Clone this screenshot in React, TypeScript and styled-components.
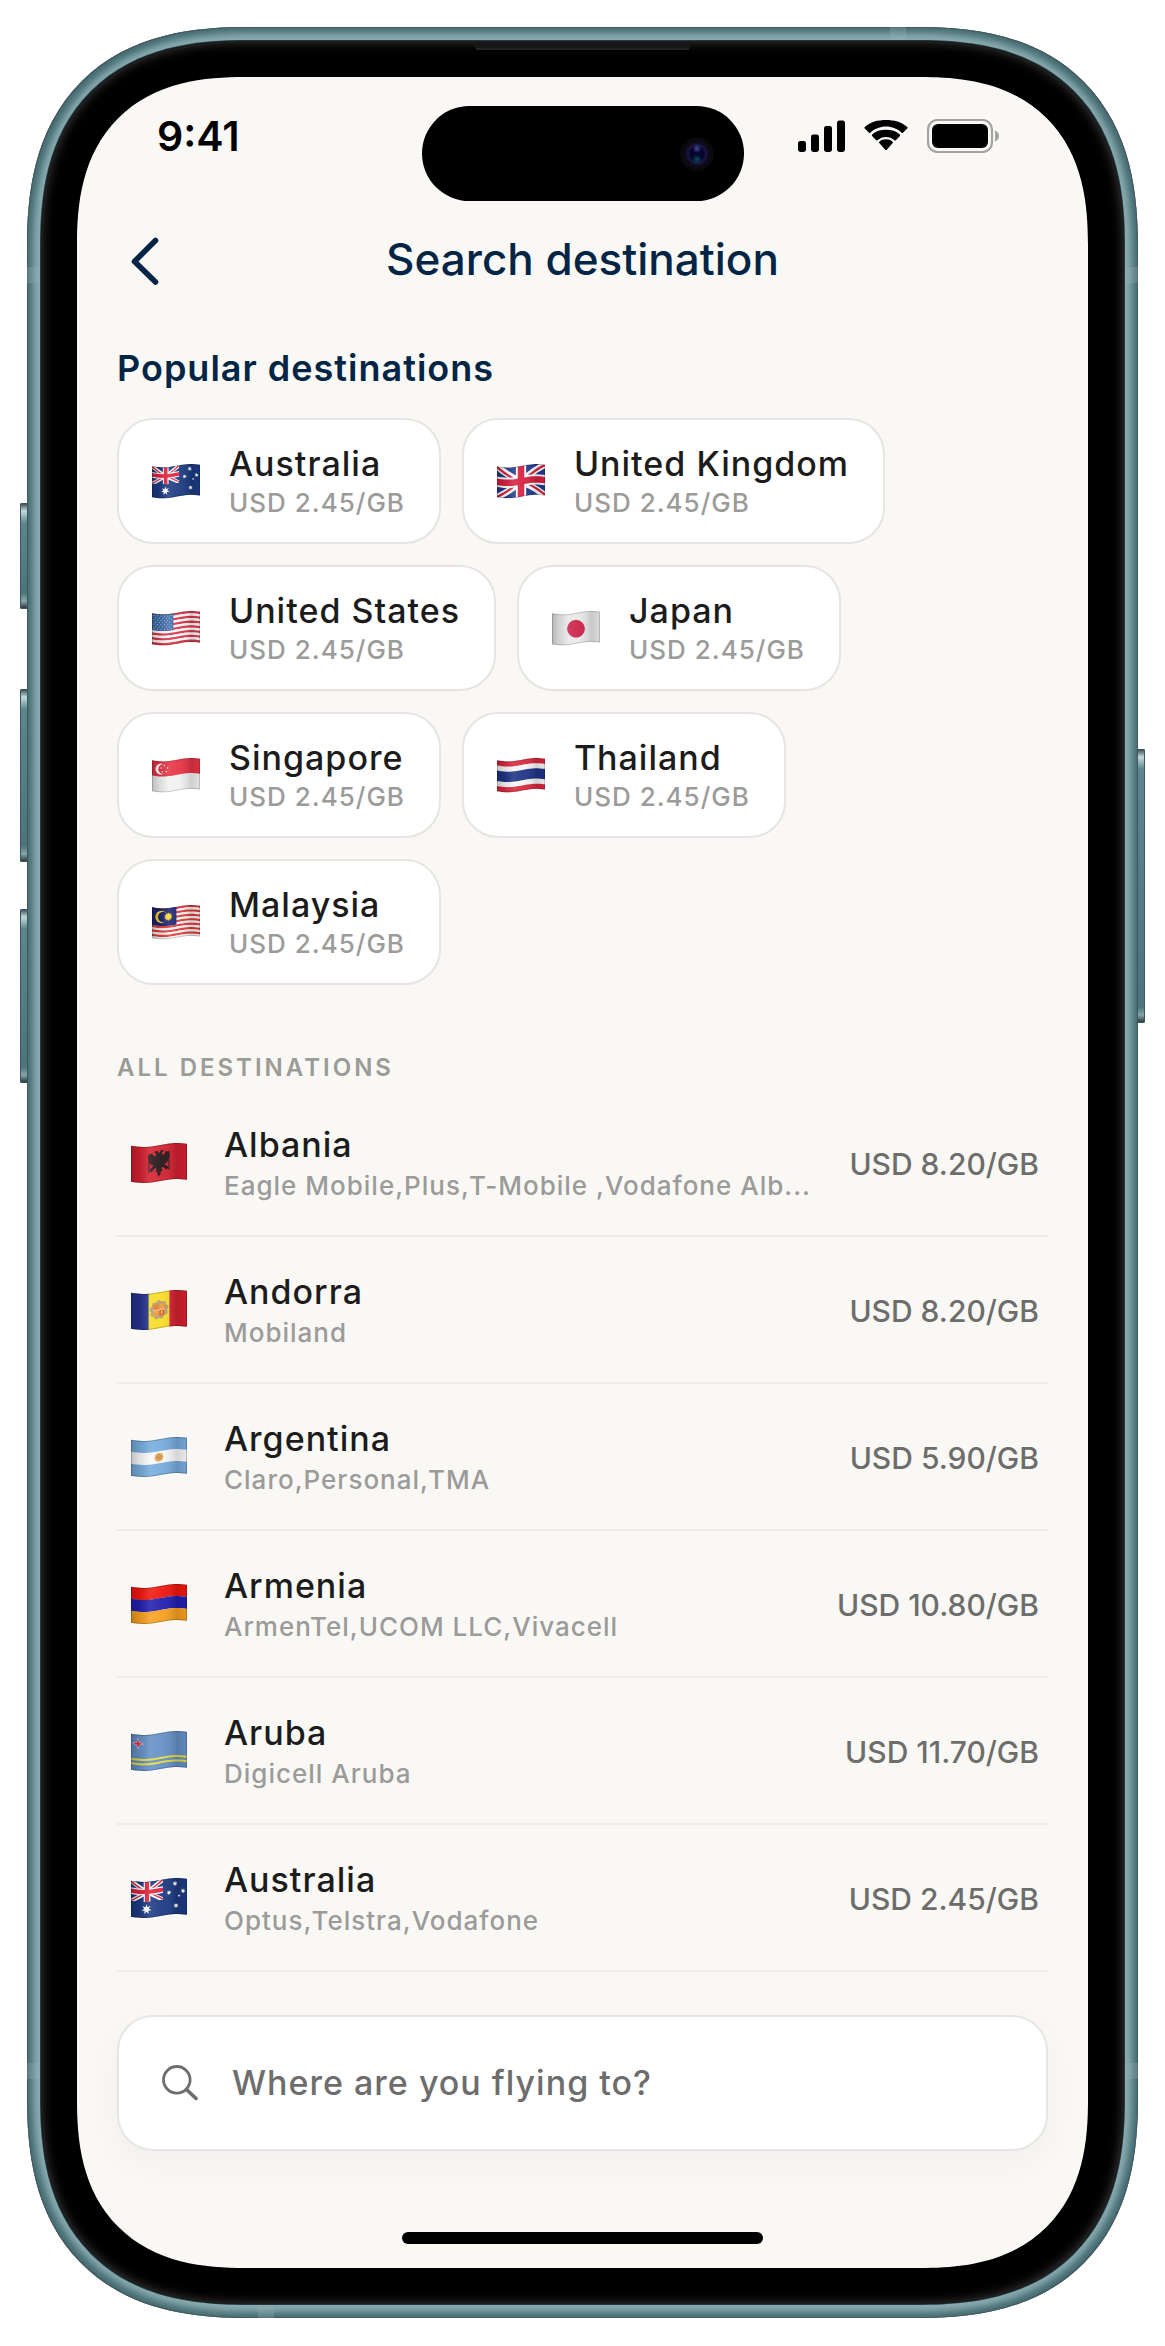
import React, { useId, useState } from "react";
import styled, { createGlobalStyle, css } from "styled-components";

/* ---------- Flags ---------- */

type Pt = [number, number];

const W = 56;
const H = 36;
const wave = (x: number) => 2 + 2 * Math.sin((2 * Math.PI * x) / 66 + 0.35);

/* Turns a flat outline into one that follows the ripple of the cloth. */
function ripple(points: Pt[], closed = true): string {
  const out: string[] = [];
  const last = closed ? points.length : points.length - 1;
  for (let i = 0; i < last; i++) {
    const [x0, y0] = points[i];
    const [x1, y1] = points[(i + 1) % points.length];
    const steps = Math.max(1, Math.ceil(Math.abs(x1 - x0) / 3));
    for (let s = 0; s < steps; s++) {
      const x = x0 + ((x1 - x0) * s) / steps;
      const y = y0 + ((y1 - y0) * s) / steps;
      out.push(`${x.toFixed(2)} ${(y + wave(x)).toFixed(2)}`);
    }
  }
  if (!closed) {
    const [x, y] = points[points.length - 1];
    out.push(`${x.toFixed(2)} ${(y + wave(x)).toFixed(2)}`);
  }
  return `M${out.join("L")}${closed ? "Z" : ""}`;
}

const rect = (x: number, y: number, w: number, h: number) =>
  ripple([
    [x, y],
    [x + w, y],
    [x + w, y + h],
    [x, y + h],
  ]);

const starPoints = (cx: number, cy: number, r: number, inner: number, n: number): Pt[] =>
  Array.from({ length: n * 2 }, (_, i) => {
    const a = (Math.PI * i) / n - Math.PI / 2;
    const d = i % 2 ? inner : r;
    return [cx + d * Math.cos(a), cy + d * Math.sin(a)] as Pt;
  });

const Band = ({ x = 0, y = 0, w = W, h = H, c }: { x?: number; y?: number; w?: number; h?: number; c: string }) => (
  <path d={rect(x, y, w, h)} fill={c} />
);
const Star = ({ x, y, r, k = 0.45, n = 7, c = "#fff" }: { x: number; y: number; r: number; k?: number; n?: number; c?: string }) => (
  <path d={ripple(starPoints(x, y, r, r * k, n))} fill={c} />
);
const Dot = ({ x, y, r, c = "#fff" }: { x: number; y: number; r: number; c?: string }) => (
  <circle cx={x} cy={y + wave(x)} r={r} fill={c} />
);
const Line = ({ p, w, c }: { p: Pt[]; w: number; c: string }) => (
  <path d={ripple(p, false)} stroke={c} strokeWidth={w} fill="none" />
);

function Union({ w, h, id, base, red }: { w: number; h: number; id: string; base: string; red: string }) {
  const u = h / 36;
  return (
    <g clipPath={`url(#${id})`}>
      <clipPath id={id}>
        <path d={rect(0, 0, w, h)} />
      </clipPath>
      <Band w={w} h={h} c={base} />
      <Line p={[[0, 0], [w, h]]} w={7.5 * u} c="#fff" />
      <Line p={[[0, h], [w, 0]]} w={7.5 * u} c="#fff" />
      <Line p={[[0, u], [w / 2, h / 2 + u]]} w={2.6 * u} c={red} />
      <Line p={[[w, h - u], [w / 2, h / 2 - u]]} w={2.6 * u} c={red} />
      <Line p={[[0, h - u * 0.2], [w / 2, h / 2 - u]]} w={2.6 * u} c={red} />
      <Line p={[[w, u * 0.2], [w / 2, h / 2 + u]]} w={2.6 * u} c={red} />
      <Band x={w / 2 - 6 * u} w={12 * u} h={h} c="#fff" />
      <Band y={h / 2 - 6 * u} w={w} h={12 * u} c="#fff" />
      <Band x={w / 2 - 3.8 * u} w={7.6 * u} h={h} c={red} />
      <Band y={h / 2 - 3.8 * u} w={w} h={7.6 * u} c={red} />
    </g>
  );
}

const eagleHalf: Pt[] = [
  [28, 8], [26.6, 5.8], [24.6, 5.2], [23, 6.6], [24.8, 7.4], [25, 9], [24, 10.6], [22.4, 9.4],
  [21, 6.8], [19.6, 8], [18, 6.8], [18.6, 9.4], [17, 9], [18.4, 11.6], [17, 11.6], [18.6, 13.8],
  [17.2, 14.2], [19.2, 16], [18, 17], [20.6, 17.8], [19.4, 19.4], [22.4, 18.8], [21.4, 21],
  [19.4, 22.4], [18, 25.6], [20, 24.4], [20.4, 26.2], [22.2, 23.8], [24.8, 22], [25.6, 23.6],
  [24.2, 26.4], [26.2, 26], [26.4, 28.6], [28, 31.4],
];
const eagle: Pt[] = [...eagleHalf, ...eagleHalf.slice(0, -1).reverse().map(([x, y]) => [56 - x, y] as Pt)];

const stripes = (n: number, a: string, b: string) =>
  Array.from({ length: n }, (_, i) => <Band key={i} y={(i * H) / n} h={H / n + 0.1} c={i % 2 ? b : a} />);

type Country = "AU" | "GB" | "US" | "JP" | "SG" | "TH" | "MY" | "AL" | "AD" | "AR" | "AM" | "AW";

function cloth(code: Country, id: string): React.ReactNode {
  switch (code) {
    case "AU":
      return (
        <>
          <Band c="#1c3a82" />
          <Union w={32} h={20} id={`${id}u`} base="#1c3a82" red="#e0243e" />
          <Star x={15.5} y={27.5} r={5.2} />
          <Star x={44} y={5.5} r={2.8} />
          <Star x={38} y={14} r={2.6} />
          <Star x={52} y={12.5} r={2.6} />
          <Star x={48} y={17.5} r={1.5} n={5} />
          <Star x={45} y={27.5} r={2.8} />
        </>
      );
    case "GB":
      return <Union w={W} h={H} id={`${id}u`} base="#223b8c" red="#d6203f" />;
    case "US":
      return (
        <>
          {stripes(13, "#d9364a", "#fafafa")}
          <Band w={25} h={19.4} c="#3c6ba8" />
          {Array.from({ length: 7 }, (_, r) =>
            Array.from({ length: r % 2 ? 5 : 6 }, (_, c) => (
              <Dot key={`${r}-${c}`} x={2.4 + c * 4 + (r % 2) * 2} y={2 + r * 2.55} r={0.6} c="#d5e2f2" />
            )),
          )}
        </>
      );
    case "JP":
      return (
        <>
          <Band c="#e9e9ea" />
          <Dot x={28} y={18.5} r={10.4} c="#cb2249" />
        </>
      );
    case "SG":
      return (
        <>
          <Band c="#f1f1f1" />
          <Band h={17.6} c="#e63343" />
          <Dot x={10.4} y={9} r={6.4} />
          <Dot x={13} y={9} r={5.6} c="#e63343" />
          {starPoints(14.4, 9, 3.9, 3.9, 5)
            .filter((_, i) => i % 2 === 0)
            .map(([x, y]) => (
              <Dot key={x + y} x={x} y={y} r={0.9} />
            ))}
        </>
      );
    case "TH":
      return (
        <>
          <Band c="#d8283b" />
          <Band y={6} h={24} c="#f5f5f5" />
          <Band y={12} h={12} c="#1f3384" />
        </>
      );
    case "MY":
      return (
        <>
          {stripes(14, "#dd3a3a", "#f4f2f0")}
          <Band w={28.5} h={20.6} c="#1c2370" />
          <Dot x={11} y={10} r={7.2} c="#f3cf2c" />
          <Dot x={13.2} y={10} r={6.2} c="#1c2370" />
          <Star x={19} y={10} r={5.2} k={0.62} n={12} c="#f8d92f" />
        </>
      );
    case "AL":
      return (
        <>
          <Band c="#d3202f" />
          <path d={ripple(eagle)} fill="#231518" />
          <Line p={[[18, 8], [18, 26]]} w={1} c="#231518" />
          <Line p={[[38, 8], [38, 26]]} w={1} c="#231518" />
        </>
      );
    case "AD":
      return (
        <>
          <Band w={18} c="#25318c" />
          <Band x={17.6} w={21} c="#f7dc23" />
          <Band x={38.4} w={17.6} c="#d5202f" />
          <Star x={28} y={17.5} r={10} k={0.82} n={9} c="#b59d72" />
          <Band x={22.6} y={12} w={5} h={5.4} c="#e8772c" />
          <Band x={28.2} y={12} w={5} h={5.4} c="#f19a31" />
          <Band x={22.6} y={18} w={5} h={5.4} c="#f19a31" />
          <Band x={28.2} y={18} w={5} h={5.4} c="#e35a2b" />
          <Line p={[[22, 17.6], [34, 17.6]]} w={0.7} c="#f5dfb0" />
          <Line p={[[30.6, 19], [30.6, 22]]} w={1.2} c="#f7dc23" />
        </>
      );
    case "AR":
      return (
        <>
          <Band c="#76abdc" />
          <Band y={12} h={12} c="#f8f8f8" />
          <Star x={28} y={18} r={5.2} k={0.72} n={12} c="#dda765" />
          <Dot x={28} y={18} r={3} c="#d4923f" />
        </>
      );
    case "AM":
      return (
        <>
          <Band h={12.1} c="#f0160f" />
          <Band y={12} h={12.1} c="#221fae" />
          <Band y={24} h={12} c="#f6a01f" />
        </>
      );
    case "AW":
      return (
        <>
          <Band c="#6590c6" />
          <Band y={24} h={2} c="#e7da3e" />
          <Band y={28.4} h={2} c="#e7da3e" />
          <Star x={7} y={9} r={6} k={0.36} n={4} c="#f1dce4" />
          <Star x={7} y={9} r={4.8} k={0.34} n={4} c="#dc2f45" />
        </>
      );
  }
}

const FlagSvg = styled.svg<{ $width: number }>`
  display: block;
  flex: none;
  width: ${(p) => p.$width}px;
  height: auto;
`;

function Flag({ code, width }: { code: Country; width: number }) {
  const id = useId();
  return (
    <FlagSvg $width={width} viewBox="0 0 56 41" aria-hidden="true">
      <defs>
        <linearGradient id={`${id}s`}>
          <stop offset="0" stopColor="#000" stopOpacity="0.22" />
          <stop offset="0.14" stopColor="#000" stopOpacity="0.1" />
          <stop offset="0.34" stopColor="#fff" stopOpacity="0.12" />
          <stop offset="0.55" stopColor="#fff" stopOpacity="0.06" />
          <stop offset="0.82" stopColor="#000" stopOpacity="0.14" />
          <stop offset="1" stopColor="#000" stopOpacity="0.06" />
        </linearGradient>
      </defs>
      {cloth(code, id)}
      <path d={rect(0, 0, W, H)} fill={`url(#${id}s)`} />
      <path d={rect(0.5, 0.5, W - 1, H - 1)} fill="none" stroke="#000" strokeOpacity="0.2" />
    </FlagSvg>
  );
}

/* ---------- Data ---------- */

const popular: { code: Country; name: string; price: string }[] = [
  { code: "AU", name: "Australia", price: "USD 2.45/GB" },
  { code: "GB", name: "United Kingdom", price: "USD 2.45/GB" },
  { code: "US", name: "United States", price: "USD 2.45/GB" },
  { code: "JP", name: "Japan", price: "USD 2.45/GB" },
  { code: "SG", name: "Singapore", price: "USD 2.45/GB" },
  { code: "TH", name: "Thailand", price: "USD 2.45/GB" },
  { code: "MY", name: "Malaysia", price: "USD 2.45/GB" },
];

const destinations: { code: Country; name: string; carriers: string; price: string }[] = [
  { code: "AL", name: "Albania", carriers: "Eagle Mobile,Plus,T-Mobile ,Vodafone Alb...", price: "USD 8.20/GB" },
  { code: "AD", name: "Andorra", carriers: "Mobiland", price: "USD 8.20/GB" },
  { code: "AR", name: "Argentina", carriers: "Claro,Personal,TMA", price: "USD 5.90/GB" },
  { code: "AM", name: "Armenia", carriers: "ArmenTel,UCOM LLC,Vivacell", price: "USD 10.80/GB" },
  { code: "AW", name: "Aruba", carriers: "Digicell Aruba", price: "USD 11.70/GB" },
  { code: "AU", name: "Australia", carriers: "Optus,Telstra,Vodafone", price: "USD 2.45/GB" },
];

/* ---------- Styles ---------- */

const GlobalStyle = createGlobalStyle`
  *, *::before, *::after { box-sizing: border-box; }
  body {
    margin: 0;
    background: #fff;
    color: #1c1c1c;
    font-family: Inter, "Liberation Sans", sans-serif;
  }
  button, input { font: inherit; color: inherit; letter-spacing: inherit; }
  h1, h2, ul { margin: 0; padding: 0; }
  ul { list-style: none; }
`;

const corner = (plain: number, smooth: number) => css`
  border-radius: ${plain}px;
  @supports (corner-shape: superellipse(1.3)) {
    border-radius: ${smooth}px;
    corner-shape: superellipse(1.3);
  }
`;

const Page = styled.main`
  padding: 27px;
`;

const Phone = styled.div`
  position: relative;
  max-width: 1111px;
  margin: 0 auto;
  padding: 14px;
  background: #8aacb0;
  box-shadow:
    inset 0 0 0 1px #48595e,
    inset 0 0 7px 6px #446c72;
  ${corner(190, 222)}
`;

const Bezel = styled.div`
  padding: 36px;
  background: #000;
  box-shadow:
    0 0 0 1px #24383d,
    inset 0 0 0 2px #1b1d1f,
    inset 0 0 12px 1px #3b3533;
  ${corner(176, 207)}
`;

const Screen = styled.div`
  display: flex;
  flex-direction: column;
  padding: 29px 40px 24px;
  background: #f9f8f5;
  ${corner(145, 168)}
`;

const SideKey = styled.span<{ $side: "left" | "right"; $top: number; $height: number }>`
  position: absolute;
  ${(p) => p.$side}: -7px;
  top: ${(p) => p.$top}px;
  width: 8px;
  height: ${(p) => p.$height}px;
  border-radius: 2px;
  background: linear-gradient(#2f4147 0, #c4dadc 8px, #5d868c 20px, #4c757b calc(100% - 16px), #86a7aa calc(100% - 8px), #1e2c31 100%);
  box-shadow: inset 0 0 0 1px #3d565c;
`;

const Antenna = styled.span<{ $edge: "left" | "right" | "top" | "bottom"; $at: number }>`
  position: absolute;
  ${(p) => p.$edge}: 0;
  ${(p) =>
    p.$edge === "left" || p.$edge === "right"
      ? css`
          top: ${p.$at}px;
          width: 13px;
          height: 16px;
        `
      : css`
          left: ${p.$at}px;
          width: 16px;
          height: 13px;
        `}
  background: rgba(150, 180, 182, 0.28);
`;

const Earpiece = styled.span`
  position: absolute;
  top: 15px;
  left: 50%;
  width: 220px;
  height: 8px;
  margin-left: -110px;
  background: linear-gradient(#161616 75%, #242424 75%);
  clip-path: polygon(0 0, 100% 0, calc(100% - 4px) 100%, 4px 100%);
`;

const StatusBar = styled.div`
  display: grid;
  grid-template-columns: 1fr 322px 1fr;
  align-items: start;
  height: 95px;
`;

const Time = styled.time`
  padding: 10px 0 0 40px;
  color: #000;
  font-size: 41px;
  font-weight: 600;
  line-height: 40px;
`;

const Island = styled.div`
  display: flex;
  align-items: center;
  justify-content: flex-end;
  height: 95px;
  padding-right: 30px;
  border-radius: 48px;
  background: #000;
`;

const Lens = styled.span`
  width: 34px;
  height: 34px;
  border-radius: 50%;
  background:
    radial-gradient(circle at 50% 34%, #4a49a0 0, rgba(60, 59, 140, 0) 16%),
    radial-gradient(circle at 50% 66%, #0e4a60 0, rgba(14, 61, 85, 0) 18%),
    radial-gradient(circle, #05052c 0 28%, #1b1744 38%, #0d0b18 48%, #0a0708 70%);
`;

const StatusIcons = styled.div`
  display: flex;
  justify-content: flex-end;
  align-items: center;
  gap: 19px;
  padding: 13px 49px 0 0;

  svg {
    display: block;
  }
`;

const Header = styled.header`
  display: grid;
  grid-template-columns: 60px 1fr 60px;
  align-items: center;
  height: 60px;
  margin-top: 28px;
`;

const BackButton = styled.button`
  display: flex;
  align-items: center;
  width: 60px;
  height: 60px;
  padding: 4px 0 0 11px;
  border: 0;
  background: none;
  color: #032545;
`;

const Title = styled.h1`
  color: #032545;
  font-size: 44px;
  font-weight: 500;
  line-height: 60px;
  text-align: center;
`;

const SectionTitle = styled.h2`
  margin-top: 57px;
  color: #032545;
  font-size: 36px;
  font-weight: 600;
  line-height: 44px;
  letter-spacing: 1px;
`;

const Chips = styled.div`
  display: flex;
  flex-wrap: wrap;
  gap: 21px;
  margin-top: 28px;
`;

const Chip = styled.button`
  display: flex;
  align-items: center;
  gap: 29px;
  height: 126px;
  padding: 2px 34px 0 33px;
  border: 2px solid #e6e5e3;
  border-radius: 36px;
  background: #fff;
  text-align: left;
`;

const Text = styled.span`
  display: flex;
  flex-direction: column;
  flex: 1;
  min-width: 0;
`;

const Name = styled.span`
  font-size: 34px;
  font-weight: 500;
  line-height: 42px;
  letter-spacing: 1px;
`;

const Detail = styled.span`
  overflow: hidden;
  color: #9b9b9a;
  font-size: 26px;
  font-weight: 500;
  line-height: 36px;
  letter-spacing: 1px;
  text-overflow: ellipsis;
  white-space: nowrap;
`;

const ListTitle = styled.h2`
  margin-top: 68px;
  color: #9b9b98;
  font-size: 24px;
  font-weight: 600;
  line-height: 30px;
  letter-spacing: 3px;
  text-transform: uppercase;
`;

const List = styled.ul`
  margin-top: 7px;
`;

const Row = styled.button`
  display: flex;
  align-items: center;
  gap: 37px;
  width: 100%;
  height: 147px;
  padding: 2px 9px 0 14px;
  border: 0;
  border-bottom: 2px solid #edecea;
  background: none;
  text-align: left;

  ${Name} {
    line-height: 44px;
  }
  ${Detail} {
    line-height: 38px;
  }
`;

const Price = styled.span`
  color: #6d6d6b;
  font-size: 30px;
  font-weight: 500;
  line-height: 38px;
  white-space: nowrap;
`;

const SearchBox = styled.label`
  display: flex;
  align-items: center;
  gap: 34px;
  height: 136px;
  margin-top: 43px;
  padding: 0 43px;
  border: 2px solid #e7e6e4;
  border-radius: 36px;
  background: #fff;
  color: #6d6d6d;
  box-shadow: 0 12px 36px rgba(0, 0, 0, 0.035);

  svg {
    flex: none;
  }
`;

const SearchInput = styled.input`
  flex: 1;
  min-width: 0;
  padding: 0;
  border: 0;
  outline: 0;
  background: none;
  font-size: 34px;
  font-weight: 500;
  line-height: 44px;
  letter-spacing: 1px;

  &::placeholder {
    color: #6d6d6d;
    opacity: 1;
  }
`;

const HomeIndicator = styled.div`
  align-self: center;
  width: 361px;
  height: 12px;
  margin-top: 81px;
  border-radius: 6px;
  background: #000;
`;

/* ---------- Icons ---------- */

const SignalIcon = () => (
  <svg width="47" height="32" viewBox="0 0 47 32" fill="#000" aria-hidden="true">
    <rect x="0" y="21" width="8" height="11" rx="2.4" />
    <rect x="13" y="14.5" width="8" height="17.5" rx="2.4" />
    <rect x="26" y="6" width="8" height="26" rx="2.4" />
    <rect x="39" y="0.5" width="8" height="31.5" rx="2.4" />
  </svg>
);

const WifiIcon = () => (
  <svg width="44" height="32" viewBox="0 0 44 32" fill="#000" aria-hidden="true">
    <path d="M22 6.6c6 0 11.500 2.300 15.700 6.200.4.300.9.300 1.300 0l4.200-4.200c.5-.4.500-1.100 0-1.500C37.500 1.900 30 0 22 0S6.500 1.900.8 7.100c-.5.4-.5 1.100 0 1.500L5 12.800c.4.300.9.300 1.300 0C10.500 8.900 16 6.600 22 6.600Z" />
    <path d="M22 16.900c3.200 0 6.200 1.200 8.500 3.300.4.300.9.300 1.300 0l4.100-4.200c.4-.4.400-1.100 0-1.500C32.200 11 27.300 9.800 22 9.800S11.800 11 8.100 14.500c-.4.4-.4 1.100 0 1.500l4.100 4.200c.4.300.9.300 1.300 0 2.300-2.100 5.300-3.300 8.500-3.300Z" />
    <path d="M28.700 23.100c.4-.4.400-1.100-.1-1.400-1.800-1.600-4.100-2.400-6.600-2.400s-4.800.8-6.600 2.400c-.5.3-.5 1-.1 1.400l5.900 6.700c.5.500 1.100.5 1.600 0Z" />
  </svg>
);

const BatteryIcon = () => (
  <svg width="72" height="34" viewBox="0 0 72 34" aria-hidden="true">
    <rect x="1" y="1" width="64" height="32" rx="9.500" fill="none" stroke="#a3a3a1" strokeWidth="2.200" />
    <rect x="5" y="5" width="56" height="24" rx="6" fill="#000" />
    <path d="M68 11.500c2.500 1 4 3.200 4 5.500s-1.500 4.500-4 5.500Z" fill="#a3a3a1" />
  </svg>
);

const ChevronIcon = () => (
  <svg width="32" height="50" viewBox="0 0 32 50" fill="none" aria-hidden="true">
    <path d="M27.500 4.500 6.500 25.500l21 20.500" stroke="currentColor" strokeWidth="5.600" strokeLinecap="round" strokeLinejoin="round" />
  </svg>
);

const SearchIcon = () => (
  <svg width="36" height="36" viewBox="0 0 36 36" fill="none" aria-hidden="true">
    <circle cx="14.800" cy="14.800" r="13.300" stroke="currentColor" strokeWidth="2.800" />
    <path d="m24.500 24.500 9.500 9" stroke="currentColor" strokeWidth="3.600" strokeLinecap="round" />
  </svg>
);

/* ---------- Screen ---------- */

export default function App() {
  const [query, setQuery] = useState("");
  return (
    <>
      <GlobalStyle />
      <Page>
        <Phone>
          <SideKey $side="left" $top={476} $height={106} />
          <SideKey $side="left" $top={662} $height={173} />
          <SideKey $side="left" $top={882} $height={174} />
          <SideKey $side="right" $top={722} $height={274} />
          <Antenna $edge="top" $at={863} />
          <Antenna $edge="bottom" $at={231} />
          <Antenna $edge="left" $at={240} />
          <Antenna $edge="right" $at={240} />
          <Antenna $edge="left" $at={2036} />
          <Antenna $edge="right" $at={2036} />
          <Bezel>
            <Screen>
              <StatusBar>
                <Time>9:41</Time>
                <Island>
                  <Lens />
                </Island>
                <StatusIcons>
                  <SignalIcon />
                  <WifiIcon />
                  <BatteryIcon />
                </StatusIcons>
              </StatusBar>

              <Header>
                <BackButton type="button" aria-label="Back">
                  <ChevronIcon />
                </BackButton>
                <Title>Search destination</Title>
              </Header>

              <SectionTitle>Popular destinations</SectionTitle>
              <Chips>
                {popular.map((item) => (
                  <Chip key={item.code} type="button">
                    <Flag code={item.code} width={48} />
                    <Text>
                      <Name>{item.name}</Name>
                      <Detail>{item.price}</Detail>
                    </Text>
                  </Chip>
                ))}
              </Chips>

              <ListTitle>All destinations</ListTitle>
              <List>
                {destinations.map((item) => (
                  <li key={item.code}>
                    <Row type="button">
                      <Flag code={item.code} width={56} />
                      <Text>
                        <Name>{item.name}</Name>
                        <Detail>{item.carriers}</Detail>
                      </Text>
                      <Price>{item.price}</Price>
                    </Row>
                  </li>
                ))}
              </List>

              <SearchBox>
                <SearchIcon />
                <SearchInput
                  type="text"
                  aria-label="Where are you flying to?"
                  placeholder="Where are you flying to?"
                  value={query}
                  onChange={(e) => setQuery(e.target.value)}
                />
              </SearchBox>

              <HomeIndicator />
            </Screen>
          </Bezel>
          <Earpiece />
        </Phone>
      </Page>
    </>
  );
}
